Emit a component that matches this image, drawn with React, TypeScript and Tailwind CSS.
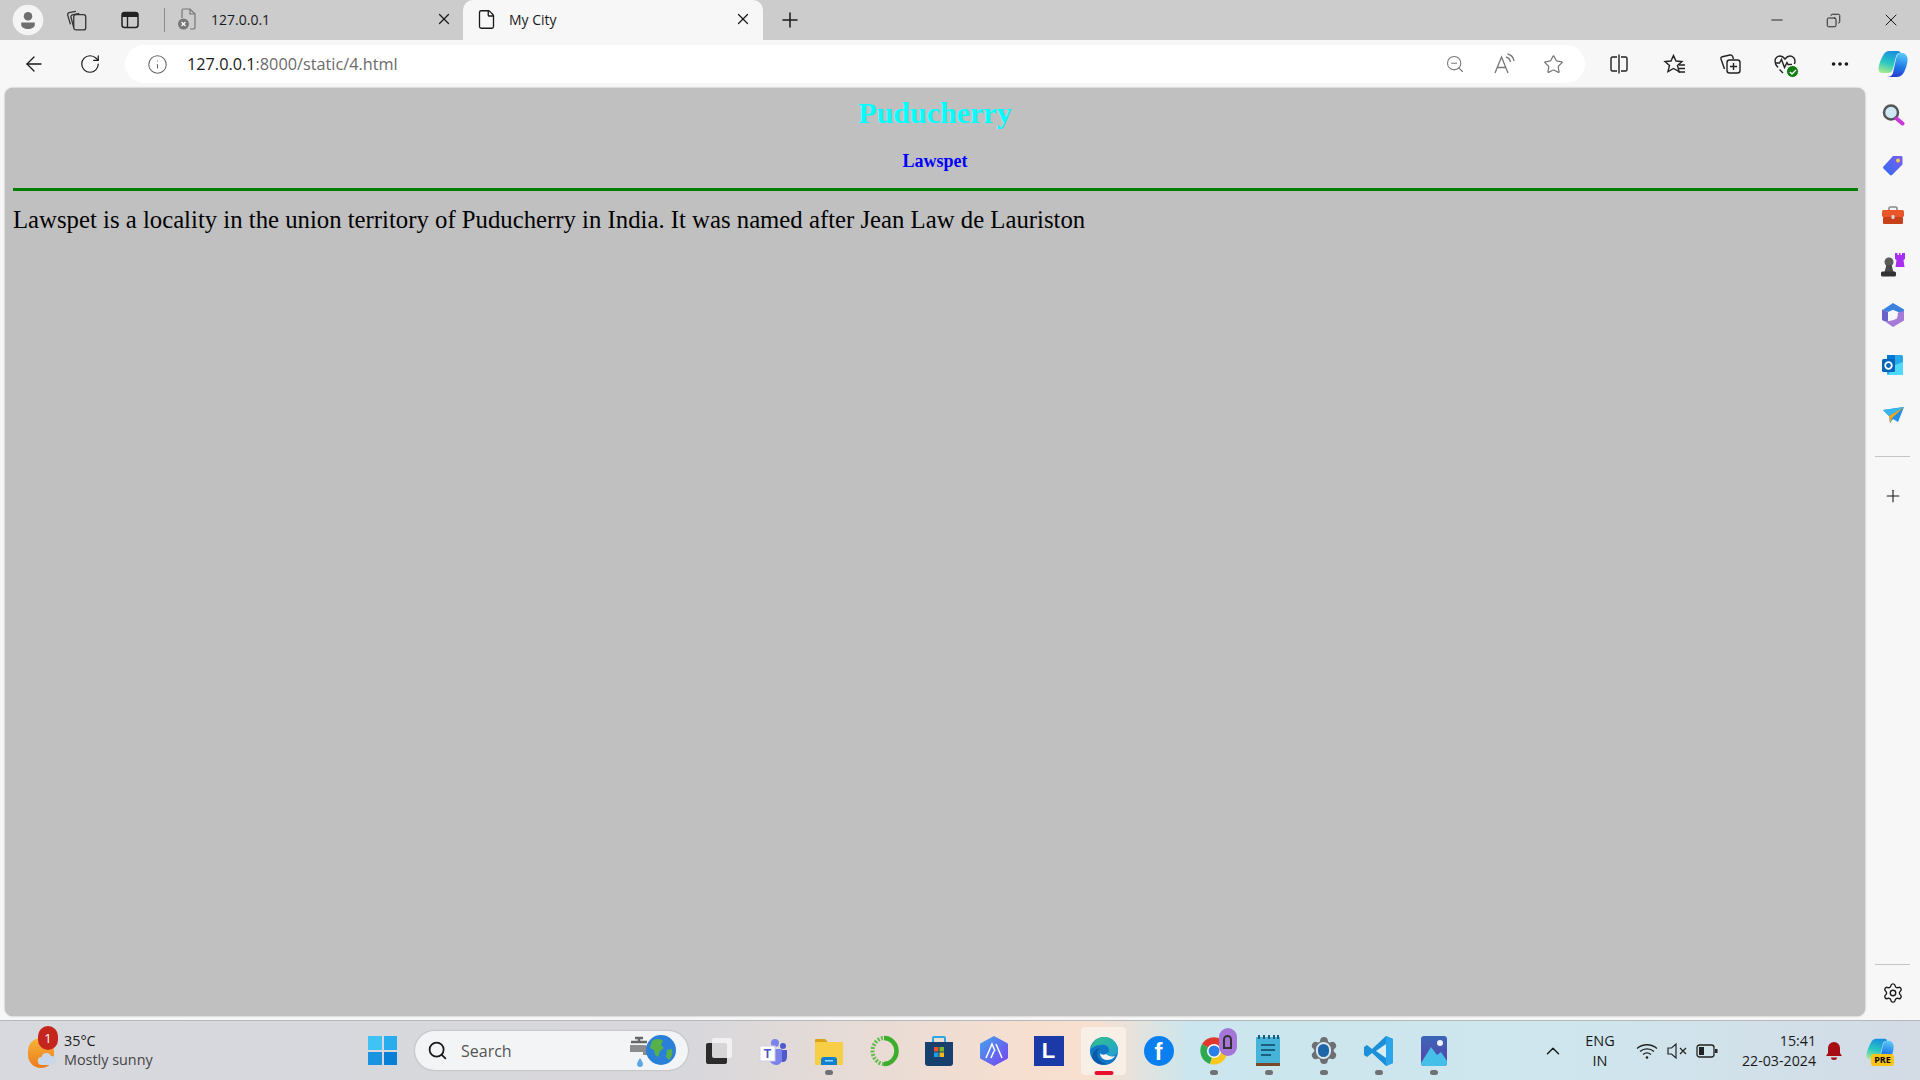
import {
  ArrowLeft,
  ChevronUp,
  Copy,
  File,
  Info,
  Minus,
  MoreHorizontal,
  Plus,
  RotateCw,
  Search,
  Settings,
  Star,
  X,
  ZoomOut,
} from "lucide-react";

const Profile = () => (
  <div className="w-9 h-9 rounded-full bg-[#f4f4f4] flex items-center justify-center">
    <svg width="22" height="24" viewBox="0 0 22 24">
      <circle cx="11" cy="7.5" r="5" fill="#6e6e6e" />
      <path d="M3 15h16v2.5c0 3-3.5 5-8 5s-8-2-8-5z" fill="#6e6e6e" />
    </svg>
  </div>
);

const CollectionsTab = () => (
  <svg width="24" height="24" viewBox="0 0 22 22" fill="none" stroke="#333" strokeWidth="1.2">
    <rect x="8" y="6" width="11" height="14" rx="2" />
    <path d="M8 18 5.5 8.5c-.3-1 .3-2 1.3-2.2L13 5" />
    <path d="M5 15 2.5 6.5c-.3-1 .3-2 1.3-2.2L10 3" />
  </svg>
);

const VerticalTabs = () => (
  <svg width="20" height="20" viewBox="0 0 20 20" fill="none">
    <rect x="2" y="2.5" width="16" height="15" rx="2.5" stroke="#222" strokeWidth="1.5" />
    <path d="M2 5a2.5 2.5 0 0 1 2.5-2.5h11A2.5 2.5 0 0 1 18 5v2H2z" fill="#222" />
    <path d="M7.5 7v10" stroke="#222" strokeWidth="1.4" />
  </svg>
);

const ErrorFile = () => (
  <svg width="22" height="24" viewBox="0 0 22 24" fill="none">
    <path d="M7 2h7l5 5v13a2 2 0 0 1-2 2h-3M6 11V4a2 2 0 0 1 1-2" stroke="#777" strokeWidth="1.2" />
    <path d="M14 2v5h5" stroke="#777" strokeWidth="1.2" />
    <circle cx="7.5" cy="17" r="5.5" fill="#777" />
    <path d="m5.5 15 4 4m0-4-4 4" stroke="#fff" strokeWidth="1.2" />
  </svg>
);

const ReadAloud = () => (
  <svg width="24" height="24" viewBox="0 0 24 24" fill="none" stroke="#777" strokeWidth="1.3">
    <path d="M3 21 9.5 5 16 21M5.5 15.5h8" />
    <path d="M14 5c2.500.5 4 2.500 4.500 5M15.500 2c3.500.7 6 3.500 6.500 7" />
  </svg>
);

const SplitScreen = () => (
  <svg width="22" height="22" viewBox="0 0 22 22" fill="none" stroke="#222" strokeWidth="1.4">
    <path d="M9 4H4.500A1.500 1.500 0 0 0 3 5.500v11A1.500 1.500 0 0 0 4.500 18H9M13 4h4.500A1.500 1.500 0 0 1 19 5.500v11a1.500 1.500 0 0 1-1.500 1.500H13M11 1.500v19" />
  </svg>
);

const Favorites = () => (
  <svg width="24" height="24" viewBox="0 0 24 24" fill="none" stroke="#222" strokeWidth="1.4">
    <path d="M10.500 3.500 13 9l6 .5-4.500 4 1.500 6-5.500-3-5.500 3 1.500-6L2 9.500 8 9z" />
    <path d="M16 13h6M15.500 16.500H22M15.500 20H22" />
  </svg>
);

const AddCollection = () => (
  <svg width="24" height="24" viewBox="0 0 24 24" fill="none" stroke="#222" strokeWidth="1.4">
    <rect x="9" y="8" width="13" height="13" rx="2.500" />
    <path d="M15.500 11v7M12 14.500h7" />
    <path d="M6.500 17 3 7c-.3-1 .3-2 1.300-2.300L12 3c1-.2 2 .3 2.500 1.300L15.500 7" />
  </svg>
);

const Health = () => (
  <div className="relative w-6 h-6">
    <svg width="24" height="24" viewBox="0 0 24 24" fill="none" stroke="#222" strokeWidth="1.4">
      <path d="M5 15.500C3 13.500 2 12 2 9a5 5 0 0 1 5-5c2 0 3.500 1 5 3 1.500-2 3-3 5-3a5 5 0 0 1 5 5c0 1-.2 2-.6 3" />
      <path d="M2 11h4.500l2-3.500 3 8 2.500-5 1 2h4M6.500 17.500l3.500 3.500" />
    </svg>
    <div className="absolute right-[-2px] bottom-[-2px] w-[13px] h-[13px] rounded-full bg-[#107c10] border border-white flex items-center justify-center">
      <svg width="8" height="8" viewBox="0 0 8 8" fill="none" stroke="#fff" strokeWidth="1.4">
        <path d="m1 4 2 2 4-4" />
      </svg>
    </div>
  </div>
);

const CopilotLogo = ({ size = 30 }: { size?: number }) => (
  <svg width={size} height={size} viewBox="0 0 30 30">
    <defs>
      <linearGradient id="copA" x1="0.6" y1="0" x2="0.3" y2="1">
        <stop offset="0" stopColor="#1a8fe0" />
        <stop offset="0.55" stopColor="#28c8c0" />
        <stop offset="1" stopColor="#a8e890" />
      </linearGradient>
      <linearGradient id="copB" x1="0.6" y1="0" x2="0.4" y2="1">
        <stop offset="0" stopColor="#58c8f8" />
        <stop offset="0.55" stopColor="#1f7ae8" />
        <stop offset="1" stopColor="#2a3cd0" />
      </linearGradient>
    </defs>
    <path d="M11 2h9c1.500 0 2.500 1 2.500 2-2.500 0-4 1-4.500 3.500L15 20c-.7 2.500-2.500 4-5 4H5c-3 0-5-2-4.500-5C1 15 3 10 5 6.500 6.500 3.500 8.500 2 11 2z" fill="url(#copA)" />
    <path d="M22 4h2c3 0 5 2 5.500 5 .5 3.500-.8 8-2.500 12-1.500 4-4 7-8 7H9c2.500 0 5-1 6-4l3-14c.5-3 2-6 4-6z" fill="url(#copB)" />
  </svg>
);

const Rocket = () => (
  <svg width="24" height="24" viewBox="0 0 24 24">
    <path d="M2 7 23 4 17 19l-5-3-3 4-1-7z" fill="#1f8fe8" />
    <path d="M2 7 23 4 8 13z" fill="#35b6f0" />
    <path d="M23 4 8 13l1 7 2-5z" fill="#f2a71b" />
  </svg>
);

const SideTag = () => (
  <svg width="24" height="24" viewBox="0 0 24 24">
    <defs>
      <linearGradient id="tagG" x1="0" y1="1" x2="1" y2="0">
        <stop offset="0" stopColor="#2f6bf0" />
        <stop offset="1" stopColor="#7c5ff0" />
      </linearGradient>
    </defs>
    <path d="M12 3h8c1 0 1.500.5 1.500 1.500v7L11 22c-.6.6-1.400.6-2 0l-6.500-6.500c-.6-.6-.6-1.400 0-2z" fill="url(#tagG)" />
    <circle cx="17" cy="7.500" r="2" fill="#f2c94c" />
  </svg>
);

const SideTools = () => (
  <svg width="24" height="24" viewBox="0 0 24 24">
    <path d="M8 8V5.500A1.500 1.500 0 0 1 9.500 4h5A1.500 1.500 0 0 1 16 5.500V8" fill="none" stroke="#8a8a8a" strokeWidth="1.6" />
    <rect x="1" y="7" width="22" height="7" rx="1.500" fill="#e8562a" />
    <rect x="2" y="14" width="20" height="7" rx="1" fill="#c8401a" />
    <rect x="10.500" y="12" width="3" height="4" rx="1" fill="#d8d8d8" />
  </svg>
);

const SideGames = () => (
  <svg width="26" height="26" viewBox="0 0 26 26">
    <circle cx="9" cy="10" r="4.500" fill="#5a5a5a" />
    <path d="M6.500 13h5l2 7H4.500z" fill="#4a4a4a" />
    <rect x="1" y="19.500" width="15" height="5" rx="1.500" fill="#333" />
    <path d="M15 1h2.500v2H19V1h1.500v2H22V1h3v6l-1.500 1 1 7H15.500l1-7L15 7z" fill="#a92ff0" />
  </svg>
);

const Ms365 = () => (
  <svg width="24" height="26" viewBox="0 0 24 26">
    <path d="M12 1 23 7.500v5L16 9.500l-4-1.500-5 2L1.500 8z" fill="#3b82e0" />
    <path d="M1 7.500 7 10v9l-3 .5L1 18z" fill="#6a62cc" />
    <path d="M23 9v9.500L12 25l-8-5.500 7-1 5-2 1-6z" fill="#a67ad8" />
    <circle cx="12" cy="13" r="4.500" fill="#f7f7f7" />
  </svg>
);

const Outlook = () => (
  <svg width="24" height="24" viewBox="0 0 24 24">
    <rect x="6" y="2" width="16" height="20" rx="1.500" fill="#28a8ea" />
    <path d="M6 2h8v6H6z" fill="#0078d4" />
    <path d="M14 12l8-3v11.500c0 1-.6 1.500-1.500 1.500H7z" fill="#50d9ff" />
    <rect x="1" y="6" width="13" height="13" rx="1.500" fill="#0364b8" />
    <circle cx="7.500" cy="12.500" r="3.300" fill="none" stroke="#fff" strokeWidth="1.800" />
  </svg>
);

const SideMagnifier = () => (
  <svg width="24" height="24" viewBox="0 0 24 24">
    <circle cx="10" cy="9.500" r="7" fill="#cfe8f5" stroke="#555" strokeWidth="2.500" />
    <path d="m15.500 15.500 6 5" stroke="#c738d8" strokeWidth="4" strokeLinecap="round" />
  </svg>
);

const sideItems = [SideMagnifier, SideTag, SideTools, SideGames, Ms365, Outlook, Rocket];

const Weather = () => (
  <div className="relative w-8 h-8">
    <div className="absolute left-0 top-[3px] w-[26px] h-[30px] rounded-full bg-gradient-to-b from-[#f4b43a] to-[#ee7a1a]" />
    <svg className="absolute left-[9px] top-[17px]" width="20" height="14" viewBox="0 0 20 14">
      <path d="M5 13a4 4 0 0 1-.5-8A5 5 0 0 1 14 4a4.500 4.500 0 0 1 1 9z" fill="#c8d8ea" />
    </svg>
    <div className="absolute left-[10px] top-[-9px] w-[20px] h-[24px] rounded-full bg-[#c4261d] text-white text-[13px] leading-[24px] text-center">
      1
    </div>
  </div>
);

const WinLogo = () => (
  <div className="grid grid-cols-2 gap-[2px] w-[29px] h-[29px]">
    <div className="bg-[#3fc2f4]" />
    <div className="bg-[#28aeee]" />
    <div className="bg-[#1a94e0]" />
    <div className="bg-[#0a7fd6]" />
  </div>
);

const SearchArt = () => (
  <svg width="50" height="38" viewBox="0 0 50 38">
    <path d="M3 10h16M11 6v4M7 6h8" stroke="#666" strokeWidth="2.500" fill="none" />
    <path d="M2 13h14c4 0 6 3 6 7v3h-7v-3H2z" fill="#8c8c8c" />
    <path d="M18 26c2 3 3 5 3 6a3 3 0 0 1-6 0c0-1 1-3 3-6z" fill="#5aa9e6" transform="translate(-6 0)" />
    <circle cx="33" cy="18" r="15" fill="#2a7fd8" />
    <path d="M24 9c4-3 9-2 11 0l-2 4 3 3-4 3-2 6-3-2-1-5-4-2zM39 18l5-1c1 4 0 8-3 11l-3-3z" fill="#58b04a" />
  </svg>
);

const Fold = () => (
  <div className="relative w-[26px] h-[26px]">
    <div className="absolute left-0 bottom-0 w-[21px] h-[21px] bg-[#2b2b2b] rounded-[2px]" />
    <div className="absolute right-0 top-0 w-[20px] h-[20px] bg-[#f4f4f4]/85 rounded-[2px]" />
  </div>
);

const Teams = () => (
  <svg width="30" height="30" viewBox="0 0 30 30">
    <circle cx="16" cy="7" r="4" fill="#7b83eb" />
    <circle cx="24" cy="10" r="3" fill="#5059c9" />
    <path d="M20 14h8v7c0 3-2 5-4 5s-4-1-4-3z" fill="#5059c9" />
    <path d="M10 13h13v10c0 4-3 6-6 6s-7-3-7-7z" fill="#7b83eb" />
    <rect x="1" y="10" width="15" height="15" fill="#fff" stroke="#d0d0e8" />
    <text x="8.500" y="22" fontFamily="Liberation Sans, sans-serif" fontSize="12" fontWeight="700" fill="#4b53bc" textAnchor="middle">T</text>
  </svg>
);

const Explorer = () => (
  <svg width="30" height="30" viewBox="0 0 30 30">
    <path d="M1 4a1 1 0 0 1 1-1h9l3 3h15v4H1z" fill="#d9a21b" />
    <rect x="1" y="6" width="28" height="23" rx="1" fill="#f7ce46" />
    <path d="M7 24a3 3 0 0 1 3-3h10a3 3 0 0 1 3 3v5H7z" fill="#0f7fd0" />
    <rect x="11" y="24" width="8" height="1.500" fill="#9fd6f7" />
  </svg>
);

const RingLogo = () => (
  <svg width="30" height="32" viewBox="0 0 30 32" fill="none">
    <path d="M15 3a12.500 13 0 0 1 0 26" stroke="#3cae2c" strokeWidth="4.500" />
    <path d="M15 29C9 29 3.500 23 3.500 16S9 3 15 3" stroke="#62bc4e" strokeWidth="4" strokeDasharray="2 1.500" />
  </svg>
);

const Store = () => (
  <svg width="30" height="32" viewBox="0 0 30 32" fill="none">
    <path d="M9 7V3a1 1 0 0 1 1-1h10a1 1 0 0 1 1 1v4" stroke="#2da7e0" strokeWidth="2" />
    <path d="M1 7h28v21a3 3 0 0 1-3 3H4a3 3 0 0 1-3-3z" fill="#17406e" />
    <rect x="10" y="12" width="4.500" height="4.500" fill="#e8512a" />
    <rect x="15.500" y="12" width="4.500" height="4.500" fill="#7cb82c" />
    <rect x="10" y="17.500" width="4.500" height="4.500" fill="#1ba1e2" />
    <rect x="15.500" y="17.500" width="4.500" height="4.500" fill="#f8b81c" />
  </svg>
);

const Hex = () => (
  <svg width="30" height="32" viewBox="0 0 30 32" fill="none">
    <defs>
      <linearGradient id="hexG" x1="0" y1="0" x2="1" y2="1">
        <stop offset="0" stopColor="#41a5ee" />
        <stop offset="1" stopColor="#7b3ff2" />
      </linearGradient>
    </defs>
    <path d="M15 1 28 8c1 .5 1 1 1 2v12c0 1 0 1.500-1 2l-13 7-13-7c-1-.5-1-1-1-2V10c0-1 0-1.500 1-2z" fill="url(#hexG)" />
    <path d="M7 23 13 9l3 7M17 9l6 14M12 23l3-7" stroke="#fff" strokeWidth="1.500" />
  </svg>
);

const LBox = () => (
  <div className="w-[30px] h-[30px] bg-[#1b3aa8] text-white font-bold text-[22px] leading-[30px] text-center font-['Liberation_Sans',sans-serif]">
    L
  </div>
);

const Edge = () => (
  <svg width="30" height="30" viewBox="0 0 30 30">
    <defs>
      <linearGradient id="edgeG" x1="0" y1="0" x2="1" y2="1">
        <stop offset="0" stopColor="#33c481" />
        <stop offset="1" stopColor="#1f9fd8" />
      </linearGradient>
    </defs>
    <circle cx="15" cy="15" r="14" fill="#1178c8" />
    <path d="M2 13C3 6 8 1 15 1c8 0 14 6 14 13 0 4-3 6-7 6-3 0-5-1-5-2 2-1 3-2 3-4 0-3-3-6-8-5-5 0-8 2-10 4z" fill="url(#edgeG)" />
    <path d="M12 12c-3 1-4 4-4 6 0 5 5 9 10 10-6 2-13-1-15-7 1-6 5-9 9-9z" fill="#0b5aa8" />
    <path d="M17 18c-2 1-5 1-6-1 0 4 3 7 7 7 3 0 6-1 8-4-3 1-7 0-9-2z" fill="#f7f3ee" />
  </svg>
);

const Facebook = () => (
  <div className="w-[30px] h-[30px] rounded-full bg-[#0a7ff0] text-white font-bold text-[24px] leading-[32px] text-center font-['Liberation_Sans',sans-serif]">
    f
  </div>
);

const Chrome = () => (
  <div className="relative w-[30px] h-[30px]">
    <svg width="30" height="30" viewBox="0 0 30 30">
      <path d="M15 15 3 8a14 14 0 0 1 24 0z" fill="#e0392b" />
      <path d="M15 15 3 8a14 14 0 0 0 8 20z" fill="#2da94f" />
      <path d="M15 15 27 8a14 14 0 0 1-16 20z" fill="#f9c81e" />
      <circle cx="15" cy="15" r="7" fill="#fff" />
      <circle cx="15" cy="15" r="5.500" fill="#2a7fe8" />
    </svg>
    <div className="absolute right-[-8px] top-[-8px] w-[18px] h-[28px] rounded-full bg-[#a675d8] flex items-center justify-center">
      <div className="w-[9px] h-[14px] rounded-t-full border-2 border-[#333]" />
    </div>
  </div>
);

const Notepad = () => (
  <svg width="28" height="34" viewBox="0 0 28 34">
    <rect x="1" y="3" width="24" height="27" fill="#45b4d8" />
    <rect x="1" y="29" width="24" height="3" fill="#7a4a28" />
    <path d="M4 1v4M9 1v4M14 1v4M19 1v4M23 1v4" stroke="#1d5c7a" strokeWidth="2" />
    <path d="M6 11h14M6 16h14M6 21h10" stroke="#17607e" strokeWidth="2" />
  </svg>
);

const Gear = () => (
  <div className="relative w-[30px] h-[30px] flex items-center justify-center">
    <Settings size={31} fill="#6c6f73" stroke="#6c6f73" strokeWidth={1.500} />
    <div className="absolute w-[15px] h-[17px] rounded-full bg-[#1e66a8] border-2 border-[#d9e8ee]" />
  </div>
);

const VsCode = () => (
  <svg width="30" height="32" viewBox="0 0 30 32">
    <path d="M22 1 29 4v24l-7 3L8 18l-5 4-3-2v-8l3-2 5 4z" fill="#1b8fd8" />
    <path d="M22 9 12 16l10 7z" fill="#d6eef5" />
    <path d="M22 1 29 4v24l-7 3z" fill="#2aa4ea" />
  </svg>
);

const Photos = () => (
  <svg width="26" height="30" viewBox="0 0 26 30">
    <defs>
      <linearGradient id="phG" x1="0" y1="0" x2="0" y2="1">
        <stop offset="0" stopColor="#3a66b8" />
        <stop offset="1" stopColor="#5c3fa8" />
      </linearGradient>
    </defs>
    <rect width="26" height="30" rx="3" fill="url(#phG)" />
    <circle cx="19" cy="7" r="3" fill="#f0f0f8" />
    <path d="M0 27 10 11l6 8 4-3 6 9v2a3 3 0 0 1-3 3H3a3 3 0 0 1-3-3z" fill="#45bfe8" />
  </svg>
);

const WifiIcon = () => (
  <svg width="22" height="18" viewBox="0 0 22 18" fill="none" stroke="#222" strokeWidth="1.300">
    <path d="M1 6.500c5.500-5 14.500-5 20 0" />
    <path d="M4 9.500c4-3.500 10-3.500 14 0" />
    <path d="M7 12.500c2.400-2 5.600-2 8 0" />
    <circle cx="11" cy="15.500" r="1.300" fill="#222" stroke="none" />
  </svg>
);

const MutedIcon = () => (
  <svg width="22" height="18" viewBox="0 0 22 18" fill="none" stroke="#222" strokeWidth="1.200">
    <path d="M2 6h3.500L10 2v14l-4.500-4H2z" />
    <path d="m14 6 6 6m0-6-6 6" />
  </svg>
);

const BatteryIcon = () => (
  <svg width="22" height="14" viewBox="0 0 22 14" fill="none">
    <rect x="1" y="1" width="17" height="12" rx="2.500" stroke="#222" strokeWidth="1.300" />
    <rect x="3" y="3" width="5" height="8" fill="#222" />
    <rect x="19" y="5" width="2.500" height="4" fill="#222" />
  </svg>
);

const Pip = ({ color = "#6f7275" }: { color?: string }) => (
  <div className="absolute bottom-0 left-1/2 -translate-x-1/2 w-2 h-[5px] rounded-full" style={{ backgroundColor: color }} />
);

const taskIcons = [
  { Icon: Fold, pip: false },
  { Icon: Teams, pip: false },
  { Icon: Explorer, pip: true },
  { Icon: RingLogo, pip: false },
  { Icon: Store, pip: false },
  { Icon: Hex, pip: false },
  { Icon: LBox, pip: false },
  { Icon: Edge, active: true, pip: false },
  { Icon: Facebook, pip: false },
  { Icon: Chrome, pip: true },
  { Icon: Notepad, pip: true },
  { Icon: Gear, pip: true },
  { Icon: VsCode, pip: true },
  { Icon: Photos, pip: true },
];

export default function App() {
  return (
    <div className="w-[1920px] h-[1080px] overflow-hidden flex flex-col bg-[#f7f7f7] text-[#1a1a1a] font-['Open_Sans',sans-serif]">
      {/* tab strip */}
      <div className="h-10 shrink-0 bg-[#cccccc] flex items-center relative">
        <div className="w-[54px] flex justify-end pr-[8px]">
          <div className="scale-[0.85]">
            <Profile />
          </div>
        </div>
        <div className="w-[46px] flex justify-center">
          <CollectionsTab />
        </div>
        <div className="w-[60px] flex justify-center">
          <VerticalTabs />
        </div>
        <div className="w-px h-6 bg-[#8a8a8a] ml-[4px]" />
        <div className="w-[298px] flex items-center pl-[11px] pb-[2px]">
          <ErrorFile />
          <span className="ml-[13px] text-[14px]">127.0.0.1</span>
          <X size={18} className="ml-auto mr-[10px]" strokeWidth={1.600} />
        </div>
        <div className="w-[300px] h-10 bg-[#f7f7f7] rounded-t-[10px] flex items-center pl-[13px] pb-[2px]">
          <File size={21} strokeWidth={1.500} />
          <span className="ml-[12px] text-[14px]">My City</span>
          <X size={18} className="ml-auto mr-[11px]" strokeWidth={1.600} />
        </div>
        <Plus size={24} className="ml-[15px]" strokeWidth={1.500} />
        <div className="ml-auto flex items-center">
          <div className="w-[57px] flex justify-center">
            <Minus size={18} strokeWidth={1.200} />
          </div>
          <div className="w-[57px] flex justify-center">
            <Copy size={15} strokeWidth={1.500} className="-scale-x-100" />
          </div>
          <div className="w-[58px] pr-[1px] flex justify-center">
            <X size={20} strokeWidth={1.200} />
          </div>
        </div>
      </div>

      {/* toolbar */}
      <div className="h-12 shrink-0 flex items-center">
        <div className="w-[68px] flex justify-center">
          <ArrowLeft size={24} strokeWidth={1.300} />
        </div>
        <div className="w-[44px] flex justify-center">
          <RotateCw size={22} strokeWidth={1.300} />
        </div>
        <div className="ml-[13px] w-[1460px] h-[38px] rounded-full bg-white flex items-center">
          <Info size={21} className="ml-[22px] text-[#666]" strokeWidth={1.200} />
          <div className="ml-[19px] text-[16.250px]">
            127.0.0.1<span className="text-[#6a6a6a]">:8000/static/4.html</span>
          </div>
          <div className="ml-auto flex items-center gap-[27px] mr-[21px] text-[#777]">
            <ZoomOut size={20} strokeWidth={1.300} />
            <ReadAloud />
            <Star size={21} strokeWidth={1.400} />
          </div>
        </div>
        <div className="flex items-center ml-[23px]">
          <SplitScreen />
          <div className="ml-[33px]">
            <Favorites />
          </div>
          <div className="ml-[31px]">
            <AddCollection />
          </div>
          <div className="ml-[31px]">
            <Health />
          </div>
          <MoreHorizontal size={22} strokeWidth={2} className="ml-[32px]" />
        </div>
        <div className="ml-auto mr-[12px]">
          <CopilotLogo />
        </div>
      </div>

      {/* page + sidebar */}
      <div className="flex-1 flex min-h-0">
        <main className="ml-[5px] w-[1860px] mb-[4px] bg-[#c0c0c0] rounded-[8px] shadow-[0_0_2px_#999] px-[8px] text-center font-['Liberation_Serif',serif]">
          <h1 className="text-[30px] leading-[34px] font-bold text-[#00ffff] mt-[8px]">Puducherry</h1>
          <h2 className="text-[18px] leading-[20px] font-bold text-[#0000ff] mt-[21px]">Lawspet</h2>
          <div className="h-[3px] bg-[#008000] mt-[17px] mr-[-1px]" />
          <p className="text-left text-[24.750px] leading-[28px] text-black mt-[15px]">
            Lawspet is a locality in the union territory of Puducherry in India. It was named after Jean Law de Lauriston
          </p>
        </main>
        <aside className="flex-1 flex flex-col items-center pt-[15px] pb-[15px]">
          <div className="flex flex-col items-center gap-[26px]">
            {sideItems.map((Item, i) => (
              <div key={i} className="h-6 flex items-center">
                <Item />
              </div>
            ))}
          </div>
          <div className="w-[35px] h-px bg-[#c4c4c4] mt-[29px]" />
          <Plus size={20} className="mt-[29px]" strokeWidth={1.300} />
          <div className="w-[35px] h-px bg-[#c4c4c4] mt-auto" />
          <Settings size={22} className="mt-[17px] mb-[1px]" strokeWidth={1.500} />
        </aside>
      </div>

      {/* taskbar */}
      <div className="h-[60px] shrink-0 flex items-center border-t border-[#b5b8bd] bg-[linear-gradient(to_right,#d7d9de_0%,#d8d8dc_36%,#f7dfcf_54%,#f8e0d0_57%,#cbe6ee_62%,#cfe6ee_82%,#d3dbe5_100%)] relative">
        <div className="w-[388px] flex items-center shrink-0 relative pl-[28px]">
          <Weather />
          <div className="ml-[4px] text-[14.400px] leading-[19px] -mt-[2px]">
            <div>35°C</div>
            <div className="text-[#444]">Mostly sunny</div>
          </div>
        </div>
        <div className="shrink-0 w-[28px] -ml-[20px]">
          <WinLogo />
        </div>
        <div className="ml-[19px] w-[273px] h-[39px] shrink-0 rounded-full bg-[#f3f4f6] shadow-[0_0_2px_#999] flex items-center pl-[12px] pr-[10px]">
          <Search size={21} strokeWidth={2} />
          <span className="ml-[13px] text-[16px] text-[#555]">Search</span>
          <div className="ml-auto">
            <SearchArt />
          </div>
        </div>
        <div className="flex items-center ml-[3px]">
          {taskIcons.map(({ Icon, pip, active }, i) => (
            <div key={i} className="relative w-[55px] h-[48px] flex items-center justify-center">
              {active && <div className="absolute inset-y-0 left-[5px] right-[5px] rounded-[4px] bg-[#f8efe7]" />}
              <div className="relative">
                <Icon />
              </div>
              {pip && <Pip />}
              {active && <div className="absolute bottom-0 left-1/2 -translate-x-1/2 w-[19px] h-[4px] rounded-full bg-[#e8112d]" />}
            </div>
          ))}
        </div>
        <ChevronUp size={22} className="ml-[81px]" strokeWidth={1.600} />
        <div className="ml-[16px] w-[40px] text-center text-[14.500px] leading-[20px]">
          ENG
          <br />
          IN
        </div>
        <div className="ml-[16px] flex items-center">
          <WifiIcon />
          <div className="ml-[8px]">
            <MutedIcon />
          </div>
          <div className="ml-[8px]">
            <BatteryIcon />
          </div>
        </div>
        <div className="ml-[18px] w-[80px] text-right text-[14.200px] leading-[20px] whitespace-nowrap">
          15:41
          <br />
          22-03-2024
        </div>
        <svg className="ml-[9px]" width="18" height="20" viewBox="0 0 18 20">
          <path d="M9 1a6 6 0 0 1 6 6v5l2 3H1l2-3V7a6 6 0 0 1 6-6z" fill="#a60d14" />
          <path d="M6 16.500h6a3 2.500 0 0 1-6 0z" fill="#a60d14" />
        </svg>
        <div className="relative ml-[23px]">
          <CopilotLogo size={28} />
          <div className="absolute left-[5px] top-[17px] w-[23px] h-[12px] rounded-[3px] bg-[#fcc419] text-[9px] leading-[12px] font-bold text-center text-black">
            PRE
          </div>
        </div>
      </div>
    </div>
  );
}
